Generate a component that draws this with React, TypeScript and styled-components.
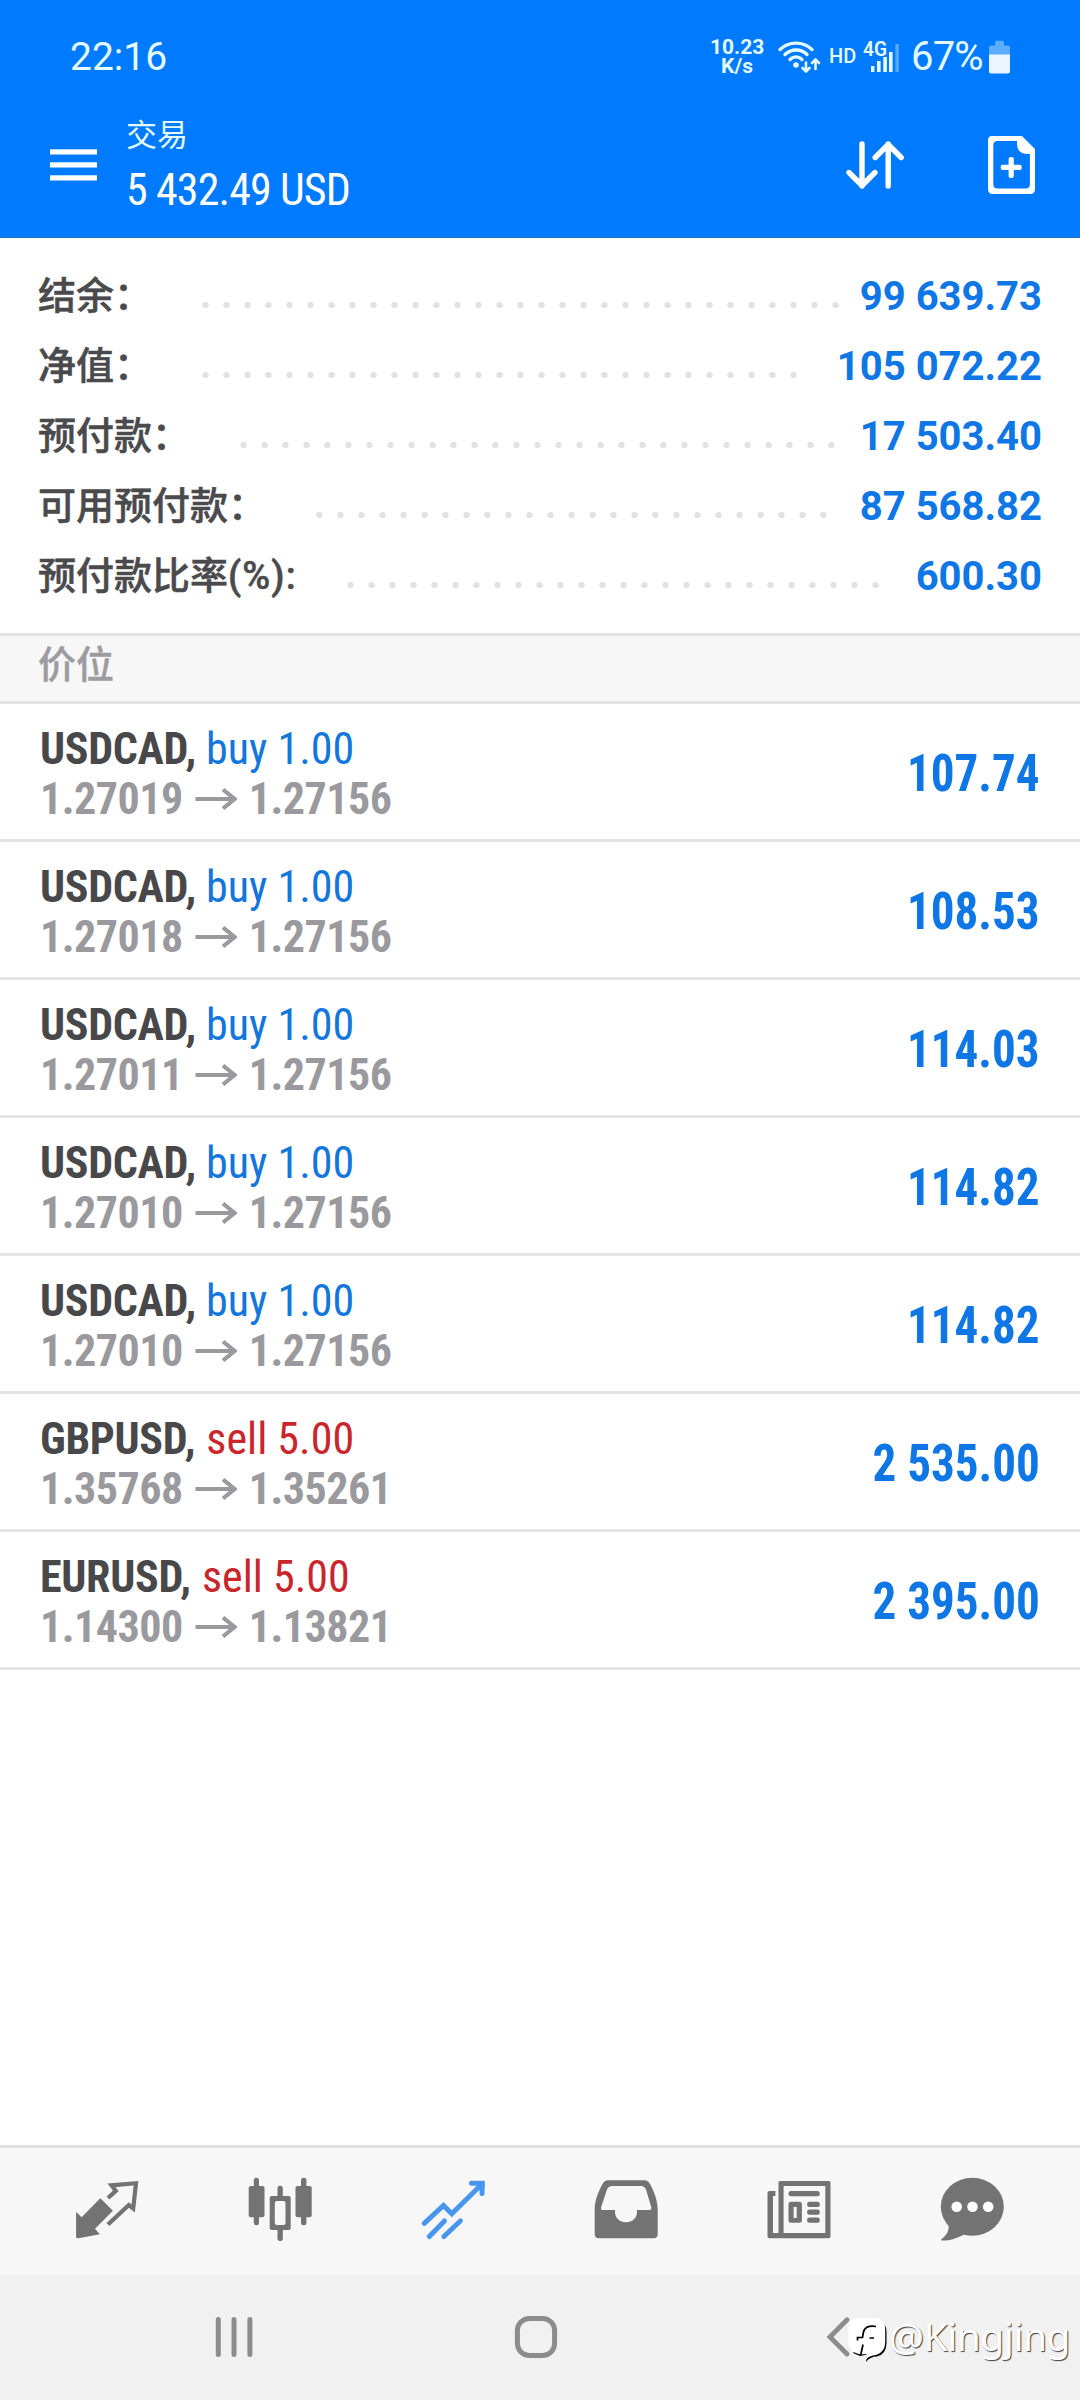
import React from 'react';
import styled, { createGlobalStyle } from 'styled-components';

const ROBOTO = 'Roboto, "Noto Sans CJK SC", sans-serif';
const CONDENSED = '"Roboto Condensed", Roboto, "Noto Sans CJK SC", sans-serif';

const GlobalStyle = createGlobalStyle`
  * { box-sizing: border-box; }
  body { margin: 0; background: #fff; font-family: ${ROBOTO}; }
  svg { display: block; flex: none; }
`;

const Screen = styled.div`
  display: flex;
  flex-direction: column;
  width: 1080px;
  height: 2400px;
  background: #fff;
  overflow: hidden;
  white-space: nowrap;
`;

/* ---------- header ---------- */
const Header = styled.header`
  height: 238px;
  background: #007aff;
  color: #fff;
  border-bottom: 1px solid #1a6fc8;
`;

const StatusBar = styled.div`
  height: 112px;
  display: flex;
  align-items: center;
  justify-content: space-between;
  padding: 2px 69px 0 70px;
  color: #e4fbff;
`;

const Clock = styled.span`
  font-size: 39px;
  line-height: 46px;
`;

const StatusRight = styled.div`
  display: flex;
  align-items: center;
`;

const NetSpeed = styled.div`
  width: 54px;
  margin-right: 13px;
  text-align: center;
  font-size: 21px;
  line-height: 19px;
  font-weight: 700;
`;

const HdLabel = styled.span`
  width: 29px;
  margin: 0 5px 0 8px;
  font-size: 20px;
  line-height: 20px;
  font-weight: 500;
  padding-bottom: 2px;
`;

const Battery = styled.span`
  width: 78px;
  margin-left: 10px;
  font-size: 40px;
  line-height: 46px;
  letter-spacing: -0.8px;
`;

const TitleBar = styled.div`
  height: 105px;
  display: flex;
  align-items: center;
  padding: 0 43px 0 50px;
`;

const TitleText = styled.div`
  flex: 1;
  margin-left: 29px;
`;

const Title = styled.div`
  font-size: 31px;
  line-height: 44px;
  color: #e4fbff;
`;

const Balance = styled.div`
  font-family: ${CONDENSED};
  font-size: 44px;
  line-height: 52px;
  letter-spacing: -0.9px;
  margin-top: 6px;
`;

const Actions = styled.div`
  display: flex;
  align-items: center;
  gap: 78px;
`;

/* ---------- account summary ---------- */
const Summary = styled.section`
  height: 395px;
  padding: 24px 38px 0;
`;

const SummaryRow = styled.div`
  height: 70px;
  display: flex;
  align-items: center;
`;

const SummaryLabel = styled.span`
  font-size: 38px;
  line-height: 54px;
  padding-bottom: 2px;
  font-weight: 500;
  color: #4a4a4d;
  -webkit-text-stroke: 0.5px #4a4a4d;
`;

const Unit = styled.span`
  letter-spacing: 1.1px;
`;

const Dots = styled.span<{ $count: number }>`
  width: ${(p) => p.$count * 21}px;
  height: 8px;
  margin: 15px auto 0 43px;
  background: radial-gradient(circle at center, #e2e2e2 2.8px, transparent 3.6px) 0 0 / 21px 8px repeat-x;
`;

const SummaryValue = styled.span`
  font-size: 40px;
  line-height: 48px;
  font-weight: 700;
  color: #0f76e6;
`;

/* ---------- positions ---------- */
const SectionTitle = styled.h2`
  height: 71px;
  margin: 0;
  padding: 0 38px;
  border: solid #e2e2e2;
  border-width: 3px 0;
  background: #f7f7f7;
  font-size: 38px;
  line-height: 58px;
  font-weight: 500;
  color: #9c9c9f;
  -webkit-text-stroke: 0.4px #9c9c9f;
`;

const Positions = styled.div`
  flex: 1;
`;

const Position = styled.div`
  height: 138px;
  display: flex;
  align-items: center;
  justify-content: space-between;
  padding: 4px 40px 0 40px;
  border-bottom: 3px solid #e4e4e4;
  font-family: ${CONDENSED};
`;

const PositionLine = styled.div`
  height: 50px;
  font-size: 44px;
  line-height: 50px;
`;

const Symbol = styled.span`
  font-weight: 700;
  letter-spacing: -0.3px;
  color: #48484b;
`;

const Side = styled.span<{ $sell: boolean }>`
  margin-left: ${(p) => (p.$sell ? 1 : 0)}px;
  color: ${(p) => (p.$sell ? '#c9252b' : '#1276dc')};
`;

const Prices = styled(PositionLine)`
  display: flex;
  align-items: center;
  gap: 12px;
  font-weight: 700;
  letter-spacing: -0.5px;
  color: #9a9a9e;
`;

const Profit = styled.span`
  font-size: 52px;
  line-height: 60px;
  font-weight: 700;
  color: #0f76e6;
  transform: scaleX(0.905);
  transform-origin: right center;
`;

/* ---------- bottom ---------- */
const TabBar = styled.nav`
  height: 129px;
  display: flex;
  align-items: center;
  padding: 0 22px 2px 20px;
  border-top: 3px solid #e0e0e0;
  background: #f7f7f7;
`;

const Tab = styled.div<{ $active?: boolean }>`
  flex: 1;
  display: flex;
  justify-content: center;
  color: ${(p) => (p.$active ? '#4796ee' : '#737373')};
`;

const SystemNav = styled.div`
  position: relative;
  height: 126px;
  display: grid;
  grid-template-columns: 302px 311px 1fr;
  align-items: center;
  padding-left: 212px;
  background: #f1f1f1;
  color: #8c8c8c;
`;

const Watermark = styled.div`
  position: absolute;
  left: 846px;
  top: 36px;
  display: flex;
  align-items: center;
  color: #fff;
  font-family: "Noto Sans", sans-serif;
  font-size: 39px;
  line-height: 52px;
  letter-spacing: -0.5px;
  text-shadow: 1px 1px 1px rgba(0, 0, 0, 0.75);
`;

const Handle = styled.span`
  margin: -2px 0 0 -1px;
`;

const summary = [
  { label: '结余：', value: '99 639.73', dots: 31 },
  { label: '净值：', value: '105 072.22', dots: 29 },
  { label: '预付款：', value: '17 503.40', dots: 29 },
  { label: '可用预付款：', value: '87 568.82', dots: 25 },
  { label: '预付款比率', unit: '(%):', value: '600.30', dots: 26 },
];

const positions = [
  { symbol: 'USDCAD', side: 'buy', lots: '1.00', open: '1.27019', now: '1.27156', profit: '107.74' },
  { symbol: 'USDCAD', side: 'buy', lots: '1.00', open: '1.27018', now: '1.27156', profit: '108.53' },
  { symbol: 'USDCAD', side: 'buy', lots: '1.00', open: '1.27011', now: '1.27156', profit: '114.03' },
  { symbol: 'USDCAD', side: 'buy', lots: '1.00', open: '1.27010', now: '1.27156', profit: '114.82' },
  { symbol: 'USDCAD', side: 'buy', lots: '1.00', open: '1.27010', now: '1.27156', profit: '114.82' },
  { symbol: 'GBPUSD', side: 'sell', lots: '5.00', open: '1.35768', now: '1.35261', profit: '2 535.00' },
  { symbol: 'EURUSD', side: 'sell', lots: '5.00', open: '1.14300', now: '1.13821', profit: '2 395.00' },
];

const WifiIcon = () => (
  <svg width="44" height="34" viewBox="0 0 44 34" fill="none" stroke="currentColor" strokeWidth="3.4" strokeLinecap="round">
    <path d="M3 9.5C12 1 26 1 35 9.5" />
    <path d="M8 14.5C14.500 8.500 24 8.500 30 14.500" />
    <path d="M13 19.500C16.500 16 21.500 16 25 19.500" />
    <circle cx="19" cy="25" r="2.8" fill="currentColor" stroke="none" />
    <g strokeWidth="2.6" strokeLinejoin="round">
      <path d="M29 22.500V31M25.500 28L29 31.500L32.500 28" />
      <path d="M38.500 29V20M35 23L38.500 19.500L42 23" />
    </g>
  </svg>
);

const SignalIcon = () => (
  <svg width="38" height="50" viewBox="0 -8 38 50" fill="currentColor">
    <text x="0" y="16" fontSize="20" fontWeight="600" fontFamily="Roboto, sans-serif" textLength="24" lengthAdjust="spacingAndGlyphs">4G</text>
    <rect x="8" y="26" width="3.400" height="6" />
    <rect x="14" y="21" width="3.600" height="11" />
    <rect x="20.300" y="17" width="3.600" height="15" />
    <rect x="26" y="12" width="3.600" height="20" />
    <rect x="32.300" y="4" width="3.600" height="28" opacity="0.35" />
  </svg>
);

const BatteryIcon = () => (
  <svg width="22" height="34" viewBox="0 0 22 34">
    <path d="M6 5.500V2.500Q6 0.800 7.500 0.800H13.500Q15 0.800 15 2.500V5.500H19Q21 5.500 21 7.500V15H0V7.500Q0 5.500 2 5.500Z" fill="#5cacff" />
    <path d="M0 14.500H21V31.500Q21 33.500 19 33.500H2Q0 33.500 0 31.500Z" fill="#eaf5fd" />
  </svg>
);

const MenuIcon = () => (
  <svg width="47" height="32" viewBox="0 0 47 32" fill="currentColor">
    <rect y="0.300" width="47" height="5.200" />
    <rect y="13.300" width="47" height="5.200" />
    <rect y="26.300" width="47" height="5.200" />
  </svg>
);

const SortIcon = () => (
  <svg width="60" height="60" viewBox="0 0 60 60" fill="none" stroke="currentColor" strokeWidth="5.400" strokeLinecap="round" strokeLinejoin="round">
    <path d="M17 9V51M4 37.500L17 50.500L30 37.500" />
    <path d="M43.200 51V9M30.200 22.500L43.200 9.500L56.200 22.500" />
  </svg>
);

const NewOrderIcon = () => (
  <svg width="54" height="60" viewBox="0 0 54 60" fill="currentColor">
    <path fillRule="evenodd" d="M9 1H39L52 14V54Q52 59 47 59H9.500Q5 59 5 54V5Q5 1 9 1ZM34 6H14.500Q10.300 6 10.300 10.500V49Q10.300 53.500 14.500 53.500H42.500Q46.900 53.500 46.900 49V19H43Q34 18 34 9Z" />
    <rect x="17.700" y="29.800" width="21" height="5.200" rx="2" />
    <rect x="25.600" y="21.900" width="5.200" height="21" rx="2" />
  </svg>
);

const ArrowIcon = () => (
  <svg width="42" height="24" viewBox="0 0 42 24" fill="none" stroke="currentColor" strokeWidth="3.800">
    <path d="M0.500 12H39" />
    <path d="M28 2.500L39.500 12L28 21.500" strokeWidth="4.200" />
  </svg>
);

const QuotesIcon = () => (
  <svg width="72" height="72" viewBox="0 0 72 72">
    <path d="M29.900 24.700L41.900 36.700L24 54.700L28.900 60.300L7.500 64.300Q5.100 64.600 5.100 62.700V38L10.600 43.300L27.800 25.700Q29 24 29.900 24.700Z" fill="currentColor" />
    <path d="M37 24L44.800 16.900L40.500 11.300L65 9.200L62.200 34.500L57.800 31L37 50.500" fill="none" stroke="currentColor" strokeWidth="4.200" />
  </svg>
);

const ChartIcon = () => (
  <svg width="72" height="72" viewBox="0 0 72 72" fill="currentColor">
    <rect x="9.800" y="3.700" width="5.200" height="47.600" rx="2.500" />
    <rect x="4.700" y="12" width="15.800" height="31.300" rx="2" />
    <rect x="57" y="3.700" width="5.400" height="47.600" rx="2.500" />
    <rect x="51.500" y="12" width="16.200" height="31.300" rx="2" />
    <rect x="33.500" y="11.700" width="5.300" height="14" rx="2.500" />
    <rect x="33.500" y="52" width="5.300" height="15" rx="2.500" />
    <path fillRule="evenodd" d="M27.700 22H44.700Q46.700 22 46.700 24V54Q46.700 56 44.700 56H27.700Q25.700 56 25.700 54V24Q25.700 22 27.700 22ZM32.800 27Q30.800 27 30.800 29V49Q30.800 51 32.800 51H39.500Q41.500 51 41.500 49V29Q41.500 27 39.500 27Z" />
  </svg>
);

const TradeIcon = () => (
  <svg width="72" height="72" viewBox="0 0 72 72" fill="none" stroke="currentColor" strokeWidth="5" strokeLinecap="round">
    <path d="M7.200 49.400L26.500 31.500L34.800 39.800L65 10" strokeLinejoin="miter" />
    <path d="M54.500 9.300H65V19.500" />
    <path d="M60 7L67.600 7V15Z" fill="currentColor" stroke="none" />
    <path d="M12.300 62.500L27.500 47" />
    <path d="M26.900 62.500L43.300 47" />
  </svg>
);

const HistoryIcon = () => (
  <svg width="72" height="72" viewBox="0 0 72 72" fill="currentColor">
    <path fillRule="evenodd" d="M18 6.300H54.500Q58 6.300 60 10C65 19 67.700 28 67.700 35V60Q67.700 64.300 63.500 64.300H9Q4.700 64.300 4.700 60V35C4.700 28 7.500 19 12.500 10Q14.500 6.300 18 6.300ZM22 12Q18.500 12 17 15.500L11.200 33Q10.300 36 12.500 36H25V38C25 44.500 30 48.300 36 48.300S47 44.500 47 38V36H59.500Q61.800 36 61.200 33L56 15.500Q54.500 12 51 12Z" />
  </svg>
);

const NewsIcon = () => (
  <svg width="72" height="72" viewBox="0 0 72 72" fill="currentColor">
    <path fillRule="evenodd" d="M17 7H66Q67.500 7 67.500 8.500V62.500Q67.500 64.300 65.700 64.300H6.300Q4.500 64.300 4.500 62.500V19Q4.500 17 6.500 17H12.400V22H10V59H15.500V8.500Q15.500 7 17 7ZM20.600 12V59H62.300V12Z" />
    <rect x="25.500" y="17" width="31.300" height="5.300" rx="2.500" />
    <path fillRule="evenodd" d="M28 27.700H36.400Q38.900 27.700 38.900 30.200V46.200Q38.900 48.700 36.400 48.700H28Q25.500 48.700 25.500 46.200V30.200Q25.500 27.700 28 27.700ZM30.600 33V44H33.700V33Z" />
    <rect x="44.100" y="27.700" width="12.700" height="5.300" rx="2.500" />
    <rect x="44.100" y="35.500" width="12.700" height="5.300" rx="2.500" />
    <rect x="44.100" y="43.400" width="12.700" height="5.300" rx="2.500" />
  </svg>
);

const ChatIcon = () => (
  <svg width="72" height="72" viewBox="0 0 72 72">
    <g fill="currentColor">
      <ellipse cx="36.300" cy="32.700" rx="31.500" ry="29" />
      <path d="M10 48L12.700 51.700C13 58 9.500 62 5.300 65.300Q4.300 66.500 6 66.600C14 66.700 21 64 27.500 60.700L32 56Z" />
    </g>
    <g fill="#fff">
      <circle cx="20.700" cy="32.700" r="5.300" />
      <circle cx="36.500" cy="32.700" r="5.300" />
      <circle cx="52.200" cy="32.700" r="5.300" />
    </g>
  </svg>
);

const RecentsIcon = () => (
  <svg width="44" height="44" viewBox="0 0 44 44" stroke="currentColor" strokeWidth="5" strokeLinecap="round">
    <path d="M6.300 4.500V39.500M22 4.500V39.500M37.900 4.500V39.500" />
  </svg>
);

const HomeIcon = () => (
  <svg width="44" height="44" viewBox="0 0 44 44" fill="none" stroke="currentColor" strokeWidth="5">
    <rect x="3.400" y="3.500" width="37.200" height="37" rx="12" />
  </svg>
);

const BackIcon = () => (
  <svg width="25" height="44" viewBox="0 0 25 44" fill="none" stroke="currentColor" strokeWidth="4.800" strokeLinecap="round">
    <path d="M22 4.700L5 22L22 39" />
  </svg>
);

const WatermarkLogo = () => (
  <svg width="44" height="54" viewBox="0 0 44 54">
    <path d="M31 12Q40.500 11 40.500 22V33Q40.500 44 31 46.500Q24 46.500 20 52L21 44.500L14 46L7 43Z" fill="#000" />
    <path d="M13 8H28Q39.200 8 39.200 19V32Q39.200 42 30 45Q23 45.500 20 49.500L20.500 44L14 44.500L6 41.500Q2.500 37 2.500 33V18Q2.500 8 13 8Z" fill="#fff" />
    <path d="M30 16.500C22 15 18 18 17.300 23L16.500 27.500H11.500V30.500M23.500 28H28M17 34.500L14.700 45" fill="none" stroke="#000" strokeWidth="1.700" />
  </svg>
);

const tabs = [QuotesIcon, ChartIcon, TradeIcon, HistoryIcon, NewsIcon, ChatIcon];

export default function App() {
  return (
    <>
      <GlobalStyle />
      <Screen>
        <Header>
          <StatusBar>
            <Clock>22:16</Clock>
            <StatusRight>
              <NetSpeed>
                10.23
                <br />
                K/s
              </NetSpeed>
              <WifiIcon />
              <HdLabel>HD</HdLabel>
              <SignalIcon />
              <Battery>67%</Battery>
              <BatteryIcon />
            </StatusRight>
          </StatusBar>
          <TitleBar>
            <MenuIcon />
            <TitleText>
              <Title>交易</Title>
              <Balance>5 432.49 USD</Balance>
            </TitleText>
            <Actions>
              <SortIcon />
              <NewOrderIcon />
            </Actions>
          </TitleBar>
        </Header>

        <Summary>
          {summary.map((row) => (
            <SummaryRow key={row.label}>
              <SummaryLabel>
                {row.label}
                {row.unit && <Unit>{row.unit}</Unit>}
              </SummaryLabel>
              <Dots $count={row.dots} />
              <SummaryValue>{row.value}</SummaryValue>
            </SummaryRow>
          ))}
        </Summary>

        <SectionTitle>价位</SectionTitle>
        <Positions>
          {positions.map((p, i) => (
            <Position key={i}>
              <div>
                <PositionLine>
                  <Symbol>{p.symbol},</Symbol>{' '}
                  <Side $sell={p.side === 'sell'}>
                    {p.side} {p.lots}
                  </Side>
                </PositionLine>
                <Prices>
                  <span>{p.open}</span>
                  <ArrowIcon />
                  <span>{p.now}</span>
                </Prices>
              </div>
              <Profit>{p.profit}</Profit>
            </Position>
          ))}
        </Positions>

        <TabBar>
          {tabs.map((Icon, i) => (
            <Tab key={i} $active={i === 2}>
              <Icon />
            </Tab>
          ))}
        </TabBar>
        <SystemNav>
          <RecentsIcon />
          <HomeIcon />
          <BackIcon />
          <Watermark>
            <WatermarkLogo />
            <Handle>@Kingjing</Handle>
          </Watermark>
        </SystemNav>
      </Screen>
    </>
  );
}
